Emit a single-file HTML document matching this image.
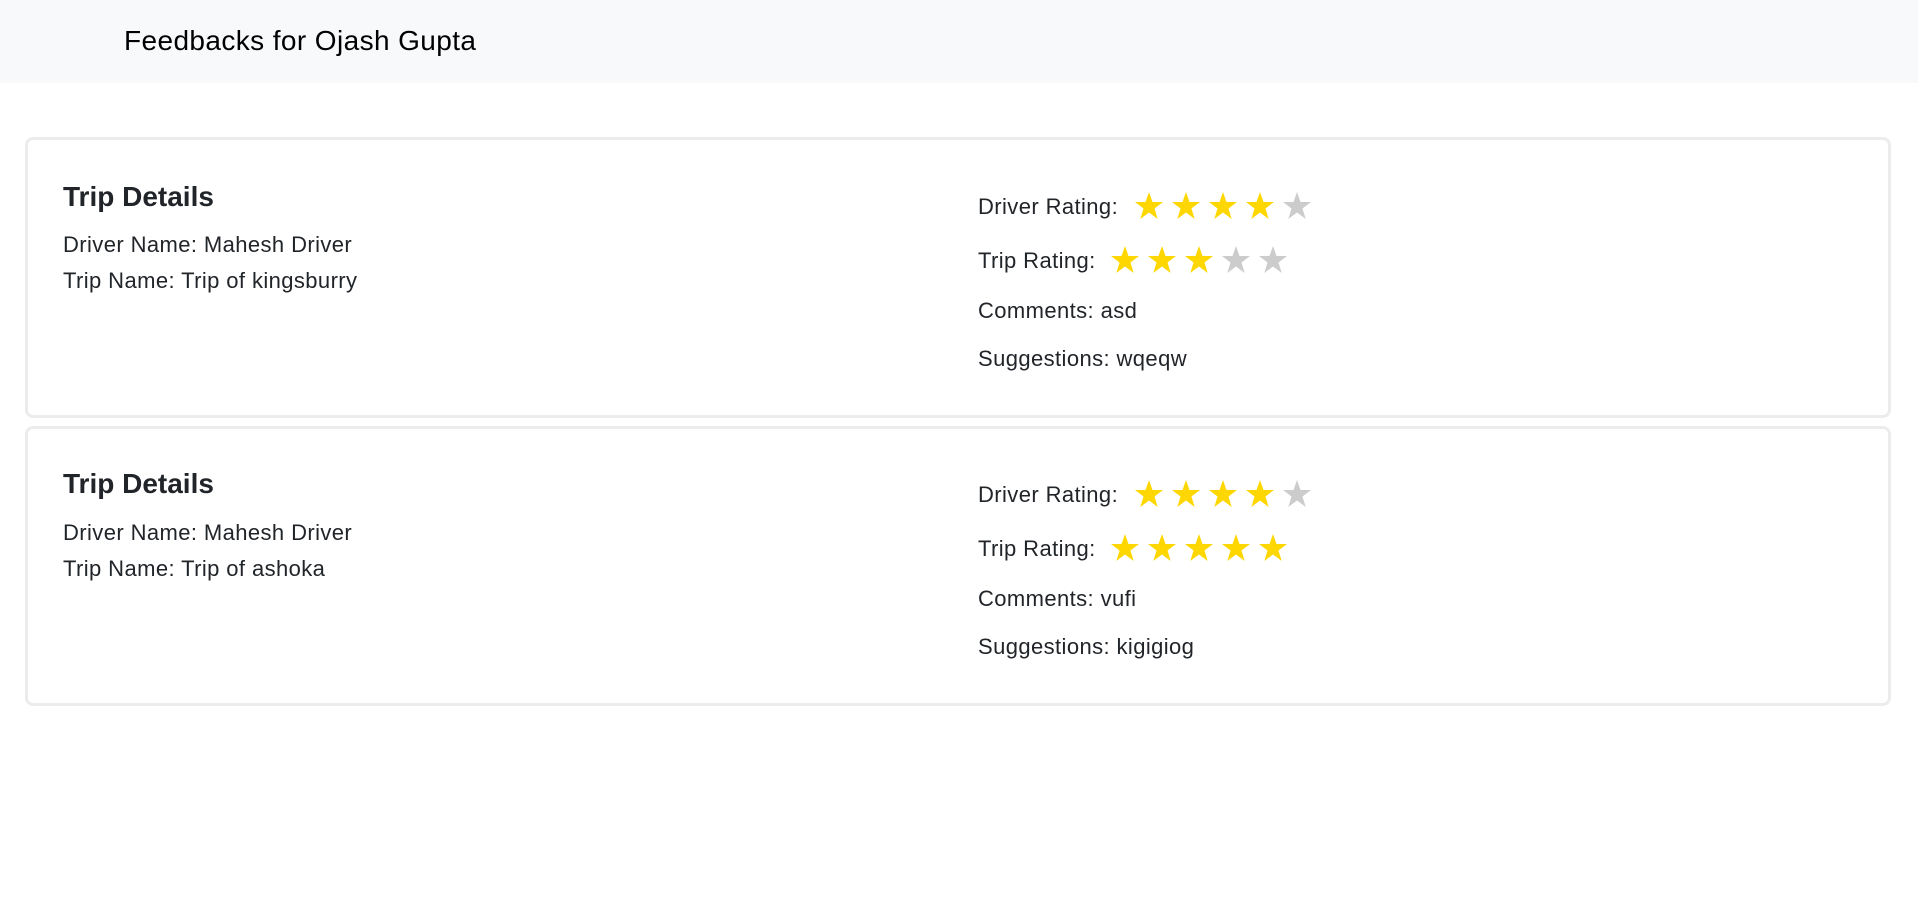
<!DOCTYPE html>
<html><head><style>
body{margin:0;width:1918px;height:903px;background:#fff;font-family:"Liberation Sans",sans-serif;color:#212529;position:relative;overflow:hidden}
.hdr{position:absolute;left:0;top:0;width:1918px;height:83px;background:#f8f9fa}
.hdr span{position:absolute;left:124px;top:25px;font-size:28px;letter-spacing:0.4px;color:#000}
.card{position:absolute;left:25px;width:1866px;border:3px solid #ececec;border-radius:8px;box-sizing:border-box}
.t{position:absolute;font-size:22px;letter-spacing:0.4px;white-space:nowrap}
.h{font-size:28px;font-weight:bold;letter-spacing:0}
svg{position:absolute}
</style></head><body>
<div class="hdr"><span>Feedbacks for Ojash Gupta</span></div>

<div class="card" style="top:137px;height:281px"></div>
<div class="card" style="top:426px;height:280px"></div>

<svg width="0" height="0"><defs><polygon id="s" points="15,1 18.5,11 29,11 20.5,17.5 23.7,28 15,21.5 6.3,28 9.5,17.5 1,11 11.5,11"/></defs></svg>

<div>
<div class="t h" style="left:63px;top:181px">Trip Details</div>
<div class="t" style="left:63px;top:232px">Driver Name: Mahesh Driver</div>
<div class="t" style="left:63px;top:268px">Trip Name: Trip of kingsburry</div>
<div class="t" style="left:978px;top:194px">Driver Rating:</div>
<svg style="left:1134px;top:191px" width="190" height="30"><use href="#s" fill="#ffd700"/><use href="#s" x="37" fill="#ffd700"/><use href="#s" x="74" fill="#ffd700"/><use href="#s" x="111" fill="#ffd700"/><use href="#s" x="148" fill="#ccc"/></svg>
<div class="t" style="left:978px;top:248px">Trip Rating:</div>
<svg style="left:1110px;top:245px" width="190" height="30"><use href="#s" fill="#ffd700"/><use href="#s" x="37" fill="#ffd700"/><use href="#s" x="74" fill="#ffd700"/><use href="#s" x="111" fill="#ccc"/><use href="#s" x="148" fill="#ccc"/></svg>
<div class="t" style="left:978px;top:298px">Comments: asd</div>
<div class="t" style="left:978px;top:346px">Suggestions: wqeqw</div>
</div>

<div>
<div class="t h" style="left:63px;top:468px">Trip Details</div>
<div class="t" style="left:63px;top:520px">Driver Name: Mahesh Driver</div>
<div class="t" style="left:63px;top:556px">Trip Name: Trip of ashoka</div>
<div class="t" style="left:978px;top:482px">Driver Rating:</div>
<svg style="left:1134px;top:479px" width="190" height="30"><use href="#s" fill="#ffd700"/><use href="#s" x="37" fill="#ffd700"/><use href="#s" x="74" fill="#ffd700"/><use href="#s" x="111" fill="#ffd700"/><use href="#s" x="148" fill="#ccc"/></svg>
<div class="t" style="left:978px;top:536px">Trip Rating:</div>
<svg style="left:1110px;top:533px" width="190" height="30"><use href="#s" fill="#ffd700"/><use href="#s" x="37" fill="#ffd700"/><use href="#s" x="74" fill="#ffd700"/><use href="#s" x="111" fill="#ffd700"/><use href="#s" x="148" fill="#ffd700"/></svg>
<div class="t" style="left:978px;top:586px">Comments: vufi</div>
<div class="t" style="left:978px;top:634px">Suggestions: kigigiog</div>
</div>
</body></html>
